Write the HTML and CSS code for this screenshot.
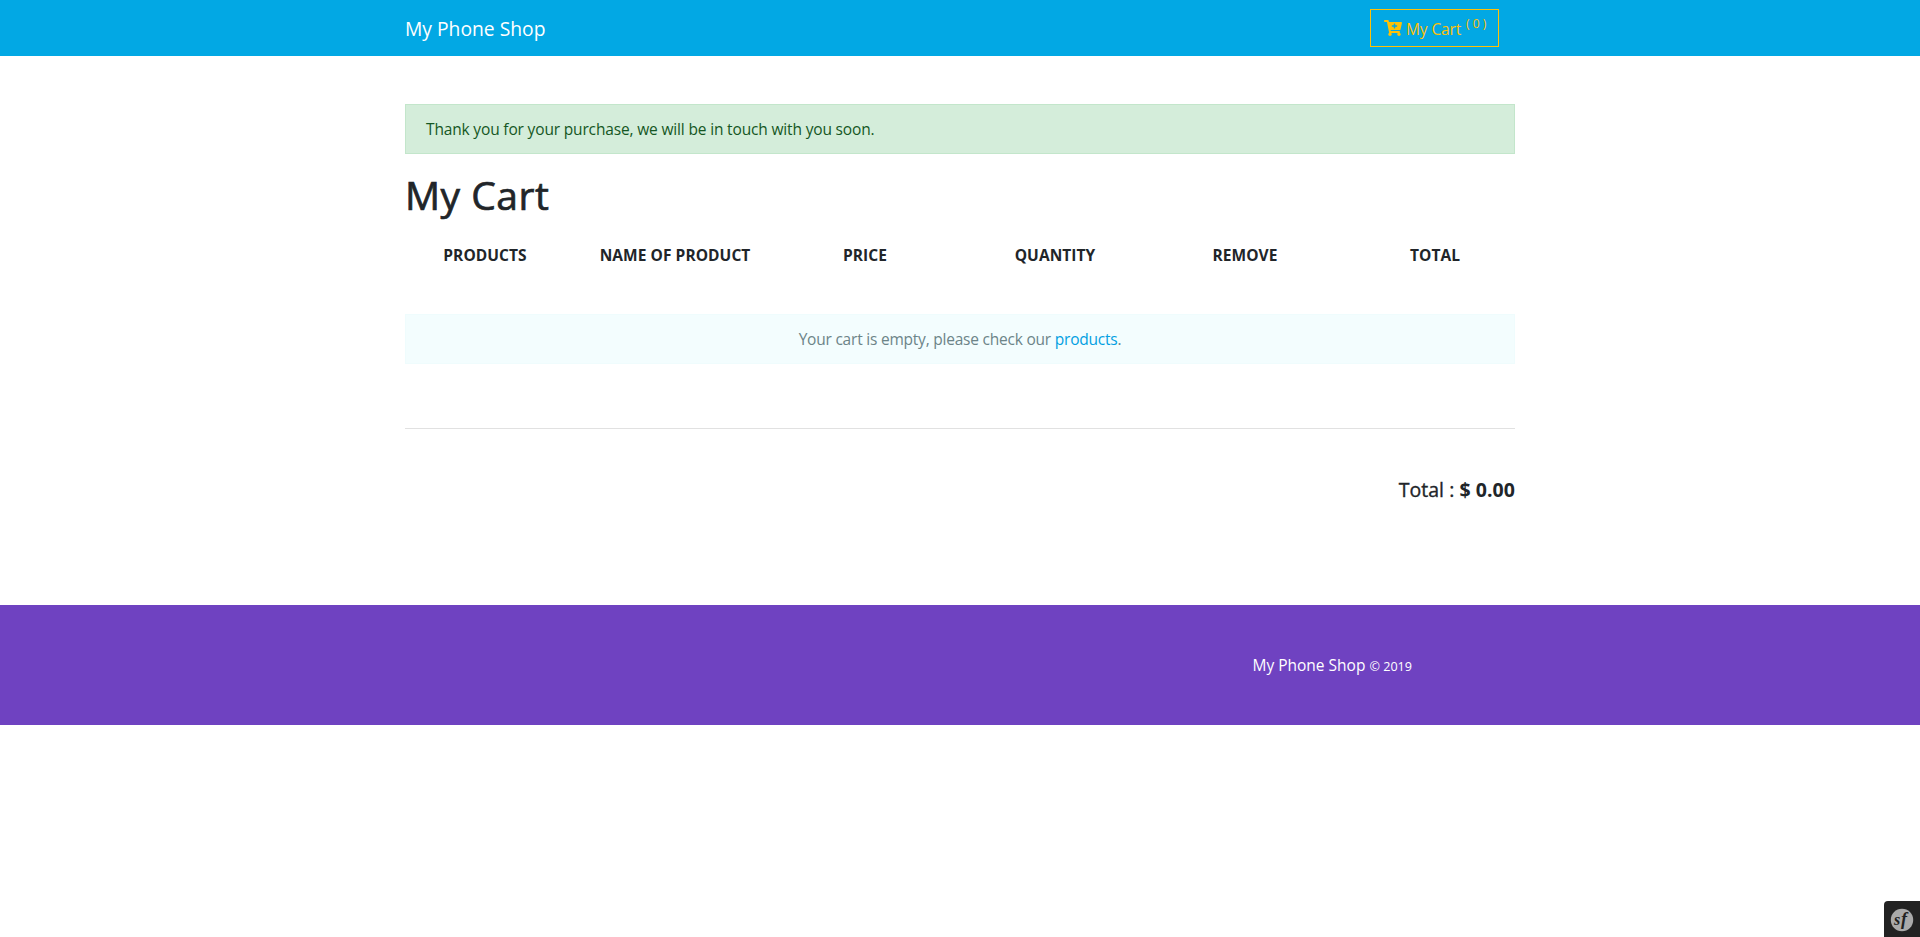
FILE: index.html
```html
<!DOCTYPE html>
<html lang="en">
<head>
<meta charset="utf-8">
<title>My Phone Shop</title>
<link rel="stylesheet" href="styles.css">
</head>
<body>
<header class="navbar">
  <div class="container navbar-inner">
    <a class="brand" href="#"><span>My Phone Shop</span></a>
    <a class="cart-btn" href="#">
      <svg class="cart-icon" viewBox="0 0 576 512"><path fill="currentColor" d="M504.717 320H211.572l6.545 32h268.418c15.401 0 26.816 14.301 23.403 29.319l-5.517 24.276C523.112 414.668 536 433.828 536 456c0 31.202-25.519 56.444-56.824 55.994-29.823-.429-54.35-24.631-55.155-54.447-.44-16.287 6.085-31.049 16.803-41.548H231.176C241.553 426.165 248 440.326 248 456c0 31.813-26.528 57.431-58.67 55.938-28.54-1.325-51.751-24.385-53.251-52.917-1.158-22.034 10.436-41.455 28.051-51.586L93.883 64H24C10.745 64 0 53.255 0 40V24C0 10.745 10.745 0 24 0h102.529c11.401 0 21.228 8.021 23.513 19.19L159.208 64H551.99c15.401 0 26.816 14.301 23.403 29.319l-47.273 208C525.637 312.246 515.923 320 504.717 320zM408 168h-48v-40c0-8.837-7.163-16-16-16h-16c-8.837 0-16 7.163-16 16v40h-48c-8.837 0-16 7.163-16 16v16c0 8.837 7.163 16 16 16h48v40c0 8.837 7.163 16 16 16h16c8.837 0 16-7.163 16-16v-40h48c8.837 0 16-7.163 16-16v-16c0-8.837-7.163-16-16-16z"/></svg>
      <span class="cart-label">My Cart</span>
      <span class="cart-count">( 0 )</span>
    </a>
  </div>
</header>
<main class="container">
  <div class="alert alert-success">Thank you for your purchase, we will be in touch with you soon.</div>
  <h1 class="title">My Cart</h1>
  <div class="columns">
    <div>PRODUCTS</div><div>NAME OF PRODUCT</div><div>PRICE</div><div>QUANTITY</div><div>REMOVE</div><div>TOTAL</div>
  </div>
  <div class="alert alert-empty">Your cart is empty, please check our <a href="#">products</a>.</div>
  <hr class="rule">
  <div class="total"><span class="total-label">Total :</span> <strong>$ 0.00</strong></div>
</main>
<footer class="footer">
  <div class="container footer-inner"><p class="copyright">My Phone Shop <small>© 2019</small></p></div>
</footer>
<div class="toolbar">
  <svg viewBox="0 0 24 24" class="sf-logo"><circle cx="12" cy="12" r="11.2" fill="#aaa"/><text x="4" y="16.5" class="sf-text">s</text><text x="11" y="16.5" class="sf-text sf-tall">f</text></svg>
</div>
</body>
</html>
```
FILE: styles.css
```css
* { box-sizing: border-box; }
body {
  margin: 0;
  background: #fff;
  color: #212529;
  font-family: "Open Sans", "Noto Sans", sans-serif;
  font-size: 15.5px;
  line-height: 24px;
}
a { text-decoration: none; }
.container { width: 1110px; margin: 0 auto; }
.navbar { height: 56px; background: #02a8e4; }
.navbar-inner { height: 56px; display: flex; align-items: center; justify-content: space-between; }
.brand { color: #fff; font-size: 19.3px; letter-spacing: 0; padding-top: 1px; }
.cart-btn {
  display: flex;
  align-items: center;
  width: 129px;
  height: 38px;
  margin-right: 16px;
  padding-left: 13px;
  border: 1px solid #ffc107;
  color: #ffc107;
}
.cart-icon { width: 18px; height: 16px; margin-right: 4px; }
.cart-label { letter-spacing: -0.1px; width: 60px; padding-top: 1px; white-space: nowrap; }
.cart-count { font-size: 12px; line-height: 12px; margin-bottom: 9px; white-space: nowrap; }
.alert { height: 50px; padding: 12px 20px; border: 1px solid; }
.alert-success {
  margin-top: 48px;
  background: #d4edda;
  border-color: #c3e6cb;
  color: #155724;
  letter-spacing: -0.16px;
}
.title {
  margin: 16px 0 0;
  font-size: 39px;
  line-height: 50px;
  font-weight: 500;
  letter-spacing: 0.5px;
  -webkit-text-stroke: 0.7px currentColor;
}
.columns {
  display: grid;
  grid-template-columns: repeat(6, 190px);
  margin: 22px -15px 48px;
  padding-top: 1px;
  height: 24px;
  text-align: center;
  font-weight: 700;
  letter-spacing: 0.06px;
}
.alert-empty {
  background: #f3fdfe;
  border-color: #effcfd;
  color: #6c8488;
  text-align: center;
  letter-spacing: -0.22px;
}
.alert-empty a { color: #02a0e2; }
.rule { margin: 64px 0 48px; border: 0; border-top: 1px solid #e1e1e1; }
.total { height: 24px; padding-top: 1px; text-align: right; font-size: 19.5px; line-height: 24px; letter-spacing: 0.05px; }
.total-label { -webkit-text-stroke: 0.35px currentColor; }
.footer { margin-top: 104px; background: #6f42c1; }
.footer-inner { height: 120px; display: flex; align-items: center; justify-content: flex-end; }
.copyright { margin: 0 103px 0 0; padding-top: 2px; color: #fff; letter-spacing: 0; white-space: nowrap; }
.copyright small { font-size: 12.6px; }
.toolbar {
  position: fixed;
  right: 0;
  bottom: 0;
  width: 36px;
  height: 36px;
  padding: 7px 6px 5px;
  background: #222;
  border-top-left-radius: 4px;
}
.sf-logo { display: block; width: 24px; height: 24px; }
.sf-text { font: italic 700 16px "Liberation Serif", serif; fill: #222; }
.sf-tall { font-size: 18px; }
```
